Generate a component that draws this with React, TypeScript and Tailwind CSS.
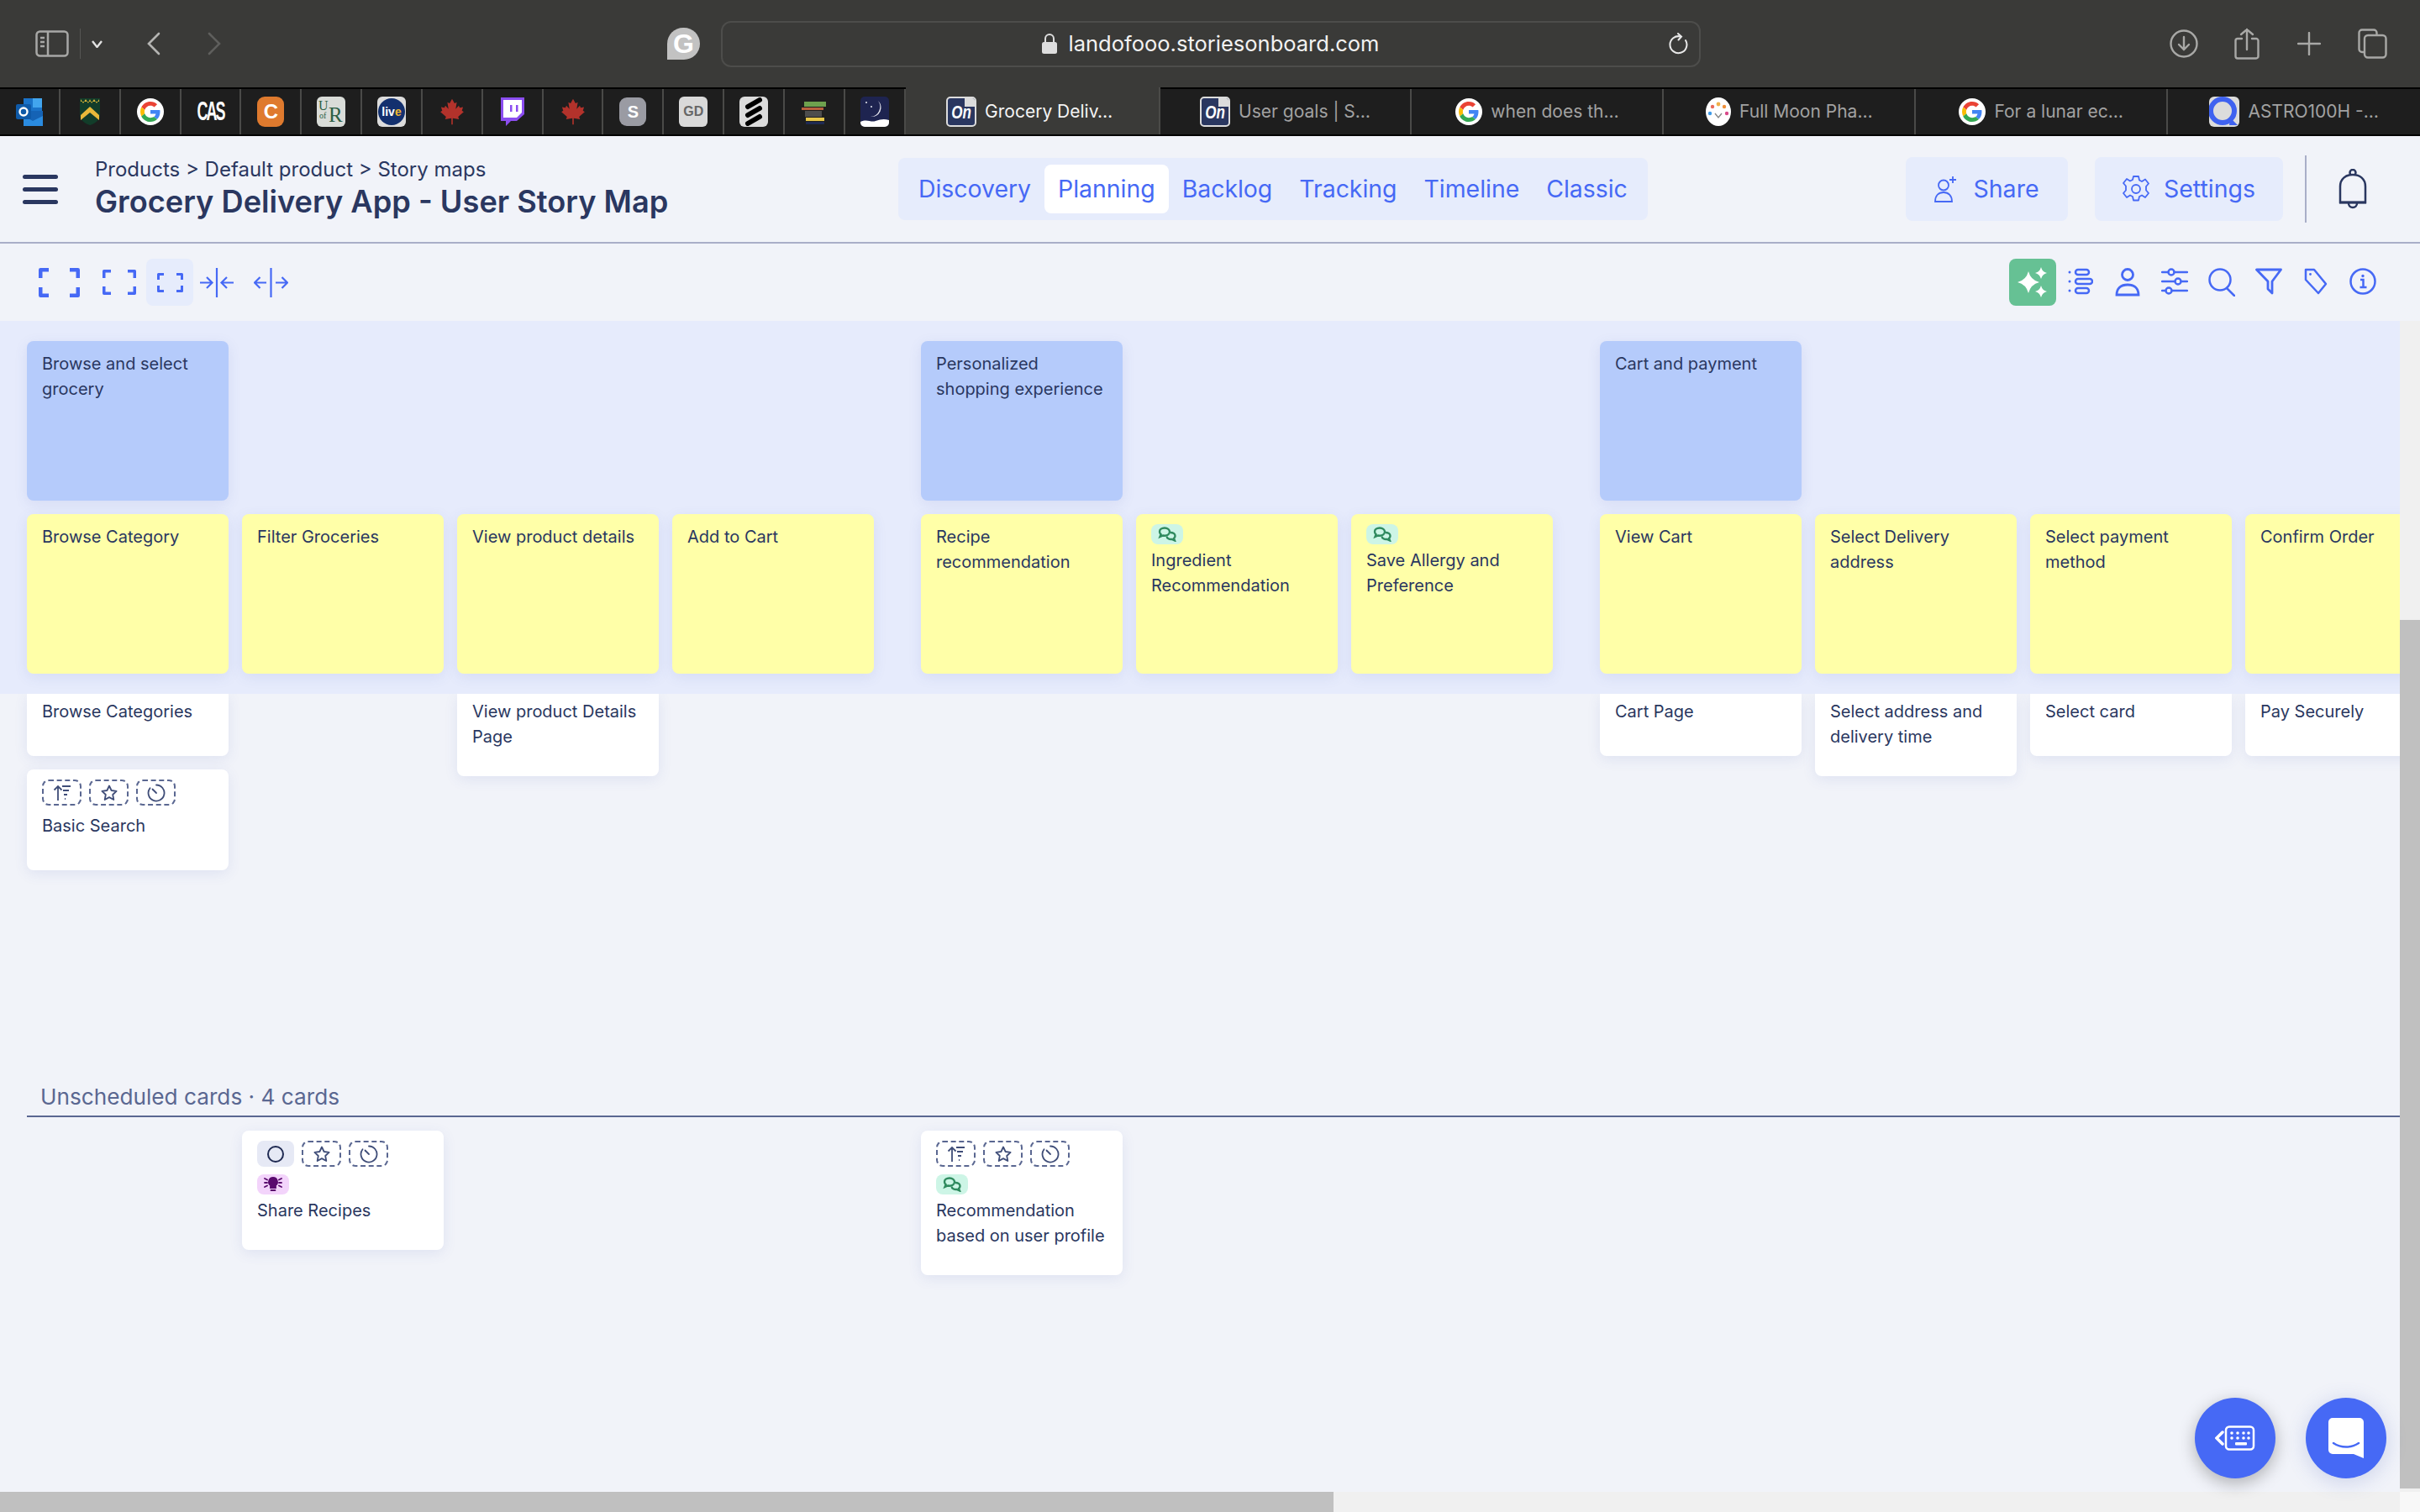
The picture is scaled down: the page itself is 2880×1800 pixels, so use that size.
import type { ReactNode } from "react";

const blue = "#4669f5";

type CardInfo = { title: string; height?: number; tag?: "chat" };

const Google = ({ size = 32 }: { size?: number }) => (
    <svg width={size} height={size} viewBox="-8 -8 64 64">
        <circle cx="24" cy="24" r="32" fill="#fff" />
        <path fill="#EA4335" d="M24 9.5c3.54 0 6.71 1.22 9.21 3.6l6.85-6.85C35.9 2.38 30.47 0 24 0 14.62 0 6.51 5.38 2.56 13.22l7.98 6.19C12.43 13.72 17.74 9.5 24 9.5z" />
        <path fill="#4285F4" d="M46.98 24.55c0-1.57-.15-3.09-.38-4.55H24v9.02h12.94c-.58 2.96-2.26 5.48-4.78 7.18l7.73 6c4.51-4.18 7.09-10.36 7.09-17.65z" />
        <path fill="#FBBC05" d="M10.53 28.59c-.48-1.45-.76-2.99-.76-4.59s.27-3.14.76-4.59l-7.98-6.19C.92 16.46 0 20.12 0 24c0 3.88.92 7.54 2.56 10.78l7.97-6.19z" />
        <path fill="#34A853" d="M24 48c6.48 0 11.93-2.13 15.89-5.81l-7.73-6c-2.15 1.45-4.92 2.3-8.16 2.3-6.26 0-11.57-4.22-13.47-9.91l-7.98 6.19C6.51 42.62 14.62 48 24 48z" />
    </svg>
);

const Maple = () => (
    <svg width="32" height="34" viewBox="0 0 24 25">
        <polygon fill="#b3322b" points="12,1 14.2,5 16.2,4 15.2,10 18,7 18.8,9 21.8,8.4 20.8,11.6 22.4,12.6 17.4,17 18.2,19.2 12.6,18.4 12.6,24 11.4,24 11.4,18.4 5.8,19.2 6.6,17 1.6,12.6 3.2,11.6 2.2,8.4 5.2,9 6,7 8.8,10 7.8,4 9.8,5" />
    </svg>
);

const Tile = ({ bg, color, children, className = "" }: { bg: string; color?: string; children?: ReactNode; className?: string }) => (
    <div className={`w-[34px] h-[36px] rounded-[6px] flex items-center justify-center overflow-hidden ${className}`} style={{ background: bg, color }}>
        {children}
    </div>
);

const OnIcon = () => (
    <div className="relative w-[36px] h-[36px] rounded-[5px] bg-[#2a3760] border-2 border-[#dcdcdc] flex items-center justify-center text-white italic font-bold text-[17px] font-['Liberation_Sans',sans-serif] overflow-hidden">
        <span className="scale-y-125 mt-[4px]">On</span>
        <div className="absolute top-0 right-0 w-[12px] h-[10px] bg-[#dcdcdc]" />
    </div>
);

const favicons: ReactNode[] = [
    <svg width="32" height="34" viewBox="0 0 32 34">
        <rect x="9" y="1" width="22" height="22" fill="#1a73c9" />
        <rect x="20" y="1" width="11" height="11" fill="#42a5ee" />
        <rect x="9" y="16" width="23" height="18" fill="#1563b5" />
        <path d="M9 22l11 6 12-6v12H9z" fill="#2a8be0" />
        <rect x="0" y="8" width="18" height="18" rx="2" fill="#0f5aa8" />
        <circle cx="9" cy="17" r="4.5" fill="none" stroke="#fff" strokeWidth="2.4" />
    </svg>,
    <svg width="26" height="34" viewBox="0 0 26 34">
        <path d="M1 1h24v20c0 6-6 10-12 12C7 31 1 27 1 21z" fill="#123d2a" />
        <path d="M2 2l3 5 3-5 3 5 2-5 2 5 3-5 3 5 3-5v3H2z" fill="#e0b93a" />
        <path d="M13 11l11 10v6l-11-9-11 9v-6z" fill="#e8b93a" />
    </svg>,
    <Google />,
    <span className="text-[18px] text-white font-bold tracking-[-2px] scale-y-[1.7] font-['Liberation_Sans',sans-serif]">CAS</span>,
    <Tile bg="#df7a2e" color="#fff" className="!w-[32px] !rounded-[9px] font-bold text-[24px] font-['Liberation_Sans',sans-serif]">C</Tile>,
    <Tile bg="#d9dcd8">
        <svg width="34" height="36" viewBox="0 0 34 36" fill="#2d5f45" fontFamily="Liberation Serif, serif">
            <text x="2" y="16" fontSize="16">U</text>
            <text x="3" y="26" fontSize="10">of</text>
            <text x="14" y="30" fontSize="25">R</text>
        </svg>
    </Tile>,
    <Tile bg="#dcdcdc">
        <div className="w-[32px] h-[32px] rounded-full bg-[#13306e] flex items-center justify-center text-[14px] font-bold text-white font-['Liberation_Sans',sans-serif]">
            liv<span className="text-[#f0b82d]">e</span>
        </div>
    </Tile>,
    <Maple />,
    <svg width="28" height="34" viewBox="0 0 28 34">
        <path d="M0 0h28v20l-9 8h-7l-6 6v-6H0z" fill="#8b4df0" />
        <path d="M3 3h22v15l-6 6H3z" fill="#fff" />
        <rect x="11" y="9" width="2.5" height="8" fill="#8b4df0" />
        <rect x="18" y="9" width="2.5" height="8" fill="#8b4df0" />
    </svg>,
    <Maple />,
    <Tile bg="#9a9ba3" color="#fff" className="!w-[32px] !h-[34px] !rounded-[9px] font-bold text-[20px] font-['Liberation_Sans',sans-serif]">S</Tile>,
    <Tile bg="#d9d9d9" color="#666" className="font-bold text-[16px] font-['Liberation_Sans',sans-serif]">GD</Tile>,
    <Tile bg="#dcdcdc">
        <svg width="24" height="34" viewBox="0 0 24 34">
            <path d="M19 3L5 11M19 13L5 21M19 23L5 31" stroke="#000" strokeWidth="6" strokeLinecap="round" />
        </svg>
    </Tile>,
    <svg width="34" height="32" viewBox="0 0 34 32">
        <rect x="5" y="4" width="26" height="6" fill="#6ea14e" />
        <rect x="2" y="11" width="26" height="3" fill="#b9603e" />
        <rect x="6" y="15" width="20" height="7" fill="#4d4d4d" />
        <rect x="7" y="23" width="22" height="4" fill="#e6c648" />
        <rect x="7" y="28" width="22" height="3" fill="#1f2a52" />
    </svg>,
    <svg width="34" height="36" viewBox="0 0 34 36">
        <rect width="34" height="36" rx="5" fill="#1e2450" />
        <path d="M21 5a11 11 0 0 1-9 19 12 12 0 0 0 9-19z" fill="#e8e8f0" />
        <circle cx="7" cy="7" r="1" fill="#e8e8f0" />
        <circle cx="13" cy="12" r="1" fill="#e8e8f0" />
        <path d="M0 30c8-4 12 1 18-1s10-3 16-1v3a5 5 0 0 1-5 5H5a5 5 0 0 1-5-5z" fill="#fff" />
    </svg>,
];

const FullMoon = () => (
    <svg width="30" height="34" viewBox="0 0 30 34">
        <ellipse cx="15" cy="17" rx="15" ry="17" fill="#fff" />
        <circle cx="15" cy="8" r="2.4" fill="#f0b04a" />
        <circle cx="8" cy="11" r="2.2" fill="#e96a5a" />
        <circle cx="22" cy="11" r="2.2" fill="#f0903a" />
        <circle cx="5" cy="19" r="2.2" fill="#3f9be8" />
        <circle cx="25" cy="19" r="2.2" fill="#d94a8a" />
        <path d="M11 19l4 5 4-5" stroke="#888" strokeWidth="1.4" fill="none" />
    </svg>
);

const QIcon = () => (
    <Tile bg="#dcdcdc" className="!w-[36px]">
        <svg width="36" height="36" viewBox="0 0 36 36">
            <circle cx="16" cy="17" r="14" fill="none" stroke="#3f62f0" strokeWidth="6" />
            <path d="M25 25l9 9H24z" fill="#3f62f0" />
        </svg>
    </Tile>
);

const tabs: { icon: ReactNode; label: string }[] = [
    { icon: <OnIcon />, label: "User goals | S…" },
    { icon: <Google />, label: "when does th…" },
    { icon: <FullMoon />, label: "Full Moon Pha…" },
    { icon: <Google />, label: "For a lunar ec…" },
    { icon: <QIcon />, label: "ASTRO100H -…" },
];

const BrowserBar = () => (
    <div className="h-[104px] bg-[#3a3a38] flex items-center">
        <svg className="ml-[42px]" width="40" height="32" viewBox="0 0 40 32" fill="none" stroke="#a8a8a6" strokeWidth="2.5">
            <rect x="1.5" y="1.5" width="37" height="29" rx="4" />
            <path d="M15 2v28" />
            <path d="M6 9h5M6 14h5M6 19h5" />
        </svg>
        <div className="ml-[13px] w-px h-[36px] bg-[#555553]" />
        <svg className="ml-[13px]" width="13" height="9" viewBox="0 0 13 9" fill="none" stroke="#e2e2e2" strokeWidth="2.4">
            <path d="M1 1l5.5 7L12 1" />
        </svg>
        <svg className="ml-[52px]" width="17" height="28" viewBox="0 0 17 28" fill="none" stroke="#b4b4b2" strokeWidth="2.6" strokeLinecap="round">
            <path d="M15 2L3 14l12 12" />
        </svg>
        <svg className="ml-[56px]" width="17" height="28" viewBox="0 0 17 28" fill="none" stroke="#5f5f5d" strokeWidth="2.6" strokeLinecap="round">
            <path d="M2 2l12 12L2 26" />
        </svg>
        <div className="ml-[530px] w-[39px] h-[38px] bg-[#c2c2c2] rounded-t-full rounded-br-full flex items-center justify-center text-white font-bold text-[32px] font-['Liberation_Sans',sans-serif]">
            G
        </div>
        <div className="ml-[25px] w-[1166px] h-[55px] rounded-[12px] border-2 border-[#4d4d4b] flex items-center pr-[12px]">
            <div className="flex-1 flex items-center justify-center gap-[14px] pl-[35px]">
                <svg width="18" height="24" viewBox="0 0 18 24">
                    <path d="M4 10V6a5 5 0 0 1 10 0v4" fill="none" stroke="#dedede" strokeWidth="2" />
                    <rect y="10" width="18" height="14" rx="2.5" fill="#dedede" />
                </svg>
                <span className="text-[25.5px] text-[#f2f2f2] font-['Inter',sans-serif]">landofooo.storiesonboard.com</span>
            </div>
            <svg width="24" height="26" viewBox="0 0 24 26" fill="none" stroke="#e8e8e8" strokeWidth="2" strokeLinecap="round">
                <path d="M20 9a10 10 0 1 1-6-4.500" />
                <path d="M11 1l4 3.500-3.500 4" />
            </svg>
        </div>
        <svg className="ml-[558px]" width="34" height="34" viewBox="0 0 34 34" fill="none" stroke="#a8a8a6" strokeWidth="2.400" strokeLinecap="round">
            <circle cx="17" cy="17" r="15.500" />
            <path d="M17 9v15M11 18l6 6 6-6" />
        </svg>
        <svg className="ml-[43px]" width="30" height="38" viewBox="0 0 30 38" fill="none" stroke="#a8a8a6" strokeWidth="2.400" strokeLinecap="round">
            <path d="M9 13H4a2.500 2.500 0 0 0-2.500 2.500V34A2.500 2.500 0 0 0 4 36.500h22a2.500 2.500 0 0 0 2.500-2.500V15.500A2.500 2.500 0 0 0 26 13h-5" />
            <path d="M15 26V2M8 8l7-6 7 6" />
        </svg>
        <svg className="ml-[45px]" width="28" height="28" viewBox="0 0 28 28" stroke="#a8a8a6" strokeWidth="2.400" strokeLinecap="round">
            <path d="M14 1v26M1 14h26" />
        </svg>
        <svg className="ml-[44px]" width="35" height="36" viewBox="0 0 35 36" fill="none" stroke="#a8a8a6" strokeWidth="2.400">
            <path d="M7 28H5a3.500 3.500 0 0 1-3.500-3.500V5A3.500 3.500 0 0 1 5 1.500h14A3.500 3.500 0 0 1 22.500 5v2" />
            <rect x="8" y="8" width="25.500" height="26.500" rx="4" />
        </svg>
    </div>
);

const TabStrip = () => (
    <div className="h-[58px] bg-[#1e1e1e] flex border-y-2 border-black">
        {favicons.map((icon, index) => (
            <div key={index} className="w-[71.87px] flex items-center justify-center border-r-2 border-[#4a4a48]">
                {icon}
            </div>
        ))}
        <div className="w-[303px] -mt-[2px] pt-[2px] pr-[6px] bg-[#3a3a38] flex items-center justify-center gap-[10px] border-r-2 border-[#4a4a48]">
            <OnIcon />
            <span className="text-[21px] text-[#f4f4f4] font-['Inter',sans-serif]">Grocery Deliv…</span>
        </div>
        {tabs.map((tab, index) => (
            <div key={index} className="w-[300px] flex items-center justify-center gap-[10px] border-r-2 border-[#4a4a48] last:border-r-0">
                {tab.icon}
                <span className="text-[21px] text-[#a2a2a2] font-['Inter',sans-serif]">{tab.label}</span>
            </div>
        ))}
    </div>
);

const navItems = ["Discovery", "Planning", "Backlog", "Tracking", "Timeline", "Classic"];

const Header = () => (
    <header className="h-[128px] border-b-2 border-[#a9aec8] flex items-center">
        <div className="ml-[27px] w-[42px] flex flex-col gap-[10px]">
            <div className="h-[5px] rounded-full bg-[#2a3760]" />
            <div className="h-[5px] rounded-full bg-[#2a3760]" />
            <div className="h-[5px] rounded-full bg-[#2a3760]" />
        </div>
        <div className="ml-[44px] w-[956px] pb-[2px] text-[#2a3760]">
            <div className="text-[24px] leading-[32px]">Products &gt; Default product &gt; Story maps</div>
            <div className="text-[36.2px] leading-[44px] font-semibold">Grocery Delivery App - User Story Map</div>
        </div>
        <nav className="w-[892px] h-[74px] rounded-[8px] bg-[#e6ecfc] flex items-center px-[8px]">
            {navItems.map((item) => (
                <div key={item} className={`h-[58px] px-[16px] rounded-[8px] flex items-center text-[28.4px] text-[#4669f5] ${item === "Planning" ? "bg-white" : ""}`}>
                    {item}
                </div>
            ))}
        </nav>
        <button className="ml-[307px] w-[193px] h-[76px] rounded-[8px] bg-[#e6ecfc] flex items-center justify-center gap-[18px] text-[28.5px] text-[#4669f5]">
            <svg width="28" height="32" viewBox="0 0 28 32" fill="none" stroke={blue} strokeWidth="1.800">
                <circle cx="11" cy="11.500" r="6" />
                <path d="M1 31c0-7 4-11 10-11s10 4 10 11z" />
                <path d="M22 1v8M18 5h8" />
            </svg>
            Share
        </button>
        <button className="ml-[32px] w-[224px] h-[76px] rounded-[8px] bg-[#e6ecfc] flex items-center justify-center gap-[17px] text-[28.5px] text-[#4669f5]">
            <svg width="32" height="32" viewBox="0 0 32 32" fill="none" stroke={blue} strokeWidth="1.800" strokeLinejoin="round">
                <circle cx="16" cy="16" r="5" />
                <path d="M13 1h6l1 4.500 3 1.500 4-2.500 4 5-3 3.500v4.500l3 3.500-4 5-4-2.500-3 1.500-1 4.500h-6l-1-4.500-3-1.500-4 2.500-4-5 3-3.500V12.500L1 9l4-5 4 2.500 3-1.500z" />
            </svg>
            Settings
        </button>
        <div className="ml-[26px] w-[2px] h-[80px] bg-[#a9aec8]" />
        <svg className="ml-[38px]" width="34" height="48" viewBox="0 0 34 48" fill="none" stroke="#2a3760" strokeWidth="2.500">
            <circle cx="17" cy="4.500" r="3.500" />
            <path d="M2 40V21C2 12 8.500 7 17 7s15 5 15 14v19z" fill="#f1f3f9" />
            <path d="M1 40h32" strokeWidth="3" />
            <path d="M12 41a5 5 0 0 0 10 0" />
        </svg>
    </header>
);

const Frame = ({ w, h, weight, corner }: { w: number; h: number; weight: number; corner: number }) => {
    const p = weight / 2;
    return (
        <svg width={w} height={h} viewBox={`0 0 ${w} ${h}`} fill="none" stroke={blue} strokeWidth={weight} strokeLinejoin="round">
            <path d={`M${p} ${corner}V${p}H${corner}M${w - corner} ${p}H${w - p}V${corner}M${w - p} ${h - corner}V${h - p}H${w - corner}M${corner} ${h - p}H${p}V${h - corner}`} />
        </svg>
    );
};

const star = (cx: number, cy: number, r: number) => {
    const k = r * 0.2;
    return `M${cx} ${cy - r}Q${cx + k} ${cy - k} ${cx + r} ${cy}Q${cx + k} ${cy + k} ${cx} ${cy + r}Q${cx - k} ${cy + k} ${cx - r} ${cy}Q${cx - k} ${cy - k} ${cx} ${cy - r}Z`;
};

const toolIcons: ReactNode[] = [
    <svg width="30" height="32" viewBox="0 0 30 32" fill="none" stroke={blue} strokeWidth="2.500">
        <circle cx="2" cy="5" r="1.500" fill={blue} stroke="none" />
        <circle cx="2" cy="16" r="1.500" fill={blue} stroke="none" />
        <circle cx="2" cy="27" r="1.500" fill={blue} stroke="none" />
        <rect x="9" y="2" width="16" height="6" rx="3" />
        <rect x="9" y="13" width="20" height="6" rx="3" />
        <rect x="9" y="24" width="16" height="6" rx="3" />
    </svg>,
    <svg width="30" height="34" viewBox="0 0 30 34" fill="none" stroke={blue} strokeWidth="2.800">
        <circle cx="15" cy="8" r="6.500" />
        <path d="M2 32c0-8 5-12 13-12s13 4 13 12z" />
    </svg>,
    <svg width="32" height="32" viewBox="0 0 32 32" fill="none" stroke={blue} strokeWidth="2.500" strokeLinecap="round">
        <path d="M1 5h7M16 5h15M1 16h15M24 16h7M1 27h4M13 27h18" />
        <circle cx="12" cy="5" r="3.500" />
        <circle cx="20" cy="16" r="3.500" />
        <circle cx="9" cy="27" r="3.500" />
    </svg>,
    <svg width="32" height="34" viewBox="0 0 32 34" fill="none" stroke={blue} strokeWidth="2.500" strokeLinecap="round">
        <circle cx="14" cy="14" r="12.500" />
        <path d="M22 24l9 9" />
    </svg>,
    <svg width="32" height="32" viewBox="0 0 32 32" fill="none" stroke={blue} strokeWidth="2.800" strokeLinejoin="round">
        <path d="M1.500 2h29L20 16v14l-5-5v-9z" />
    </svg>,
    <svg width="28" height="32" viewBox="0 0 28 32" fill="none" stroke={blue} strokeWidth="2.500" strokeLinejoin="round">
        <path d="M2 2h10l14 17-9 11L2 14z" />
        <circle cx="7.500" cy="7.500" r="1.400" fill={blue} stroke="none" />
    </svg>,
    <svg width="32" height="32" viewBox="0 0 32 32" fill="none" stroke={blue} strokeWidth="2.500">
        <circle cx="16" cy="16" r="14.500" />
        <circle cx="16" cy="9.500" r="1.700" fill={blue} stroke="none" />
        <path d="M13 14h3.500v9M12.500 23h8" />
    </svg>,
];

const ToolRow = () => (
    <div className="h-[92px] flex items-center">
        <div className="ml-[46px]"><Frame w={49} h={35} weight={4.5} corner={12} /></div>
        <div className="ml-[27px]"><Frame w={40} h={30} weight={3.5} corner={10} /></div>
        <div className="ml-[12px] w-[56px] h-[56px] rounded-[8px] bg-[#e6ecfc] flex items-center justify-center">
            <Frame w={31} h={23} weight={3} corner={8} />
        </div>
        <svg className="ml-[8px]" width="40" height="35" viewBox="0 0 40 35" fill="none" stroke={blue} strokeWidth="2.200">
            <path d="M20 0v35M0 17.500h14M8 11l6.500 6.500L8 24M40 17.500H26M32 11l-6.500 6.500L32 24" />
        </svg>
        <svg className="ml-[24px]" width="41" height="35" viewBox="0 0 41 35" fill="none" stroke={blue} strokeWidth="2.200">
            <path d="M20.500 0v35M15 17.500H1M7.500 11L1 17.500 7.500 24M26 17.500h14M33.500 11l6.500 6.500-6.500 6.500" />
        </svg>
        <div className="ml-auto w-[56px] h-[56px] rounded-[8px] bg-[#66c194] flex items-center justify-center">
            <svg width="36" height="36" viewBox="0 0 36 36" fill="#fff">
                <path d={star(13, 18, 13)} />
                <path d={star(28, 7, 7)} />
                <path d={star(28, 29, 7)} />
            </svg>
        </div>
        <div className="ml-[1px] mr-[40px] flex">
            {toolIcons.map((icon, index) => (
                <div key={index} className="w-[56px] flex justify-center">{icon}</div>
            ))}
        </div>
    </div>
);

const SortIcon = () => (
    <svg width="22" height="20" viewBox="0 0 22 20" fill="none" stroke="#3f4d78" strokeWidth="1.800">
        <path d="M6 19V2M1.500 6.500L6 2l4.500 4.500M11 2h10M12 7h7M13 12h4M14 17h1" />
    </svg>
);
const StarIcon = () => (
    <svg width="20" height="20" viewBox="0 0 20 20" fill="none" stroke="#3f4d78" strokeWidth="1.800" strokeLinejoin="round">
        <path d="M10 1.500l2.600 5.500 6 .8-4.400 4.200 1.100 6L10 15.100 4.700 18l1.100-6L1.400 7.800l6-.8z" />
    </svg>
);
const TimerIcon = () => (
    <svg width="22" height="22" viewBox="0 0 22 22" fill="none" stroke="#3f4d78" strokeWidth="1.800" strokeLinecap="round">
        <path d="M11 1.500a9.500 9.500 0 1 1-7.500 3.700" />
        <path d="M6.500 6.500L11 11" />
    </svg>
);
const ChatIcon = () => (
    <svg width="24" height="18" viewBox="0 0 24 18" fill="none" stroke="#2f8a5e" strokeWidth="2.400">
        <path d="M9 1.500c-3.500 0-6 2-6 4.500 0 1.300.6 2.400 1.600 3.200L3.500 12l3.500-1.500c.7.200 1.300.2 2 .2 3.500 0 6-2 6-4.600S12.500 1.500 9 1.500z" />
        <path d="M16 7c3 0 5.500 1.600 5.500 4 0 1.200-.6 2.200-1.500 2.900l1 2.600-3.400-1.500c-3 .3-6-1-6-3.500" />
    </svg>
);
const BulbIcon = () => (
    <svg width="22" height="20" viewBox="0 0 22 20" fill="#5a0a6e" stroke="#5a0a6e" strokeWidth="1.800" strokeLinecap="round">
        <path d="M11 2a5 5 0 0 0-3 9v3h6v-3a5 5 0 0 0-3-9z" />
        <path d="M8.500 17h5M1 3l3 1.500M1 8h3M1 13l3-1.500M21 3l-3 1.500M21 8h-3M21 13l-3-1.500" fill="none" />
    </svg>
);

const Dash = ({ children }: { children: ReactNode }) => (
    <div className="w-[47px] h-[31px] rounded-[8px] border-2 border-dashed border-[#5a6791] flex items-center justify-center">
        {children}
    </div>
);

const PillRow = ({ first }: { first: "sort" | "open" }) => (
    <div className="flex gap-[9px]">
        {first === "sort" ? (
            <Dash><SortIcon /></Dash>
        ) : (
            <div className="w-[44px] h-[31px] rounded-[8px] bg-[#e6e9f5] flex items-center justify-center">
                <div className="w-[20px] h-[20px] rounded-full border-2 border-[#1f2a52]" />
            </div>
        )}
        <Dash><StarIcon /></Dash>
        <Dash><TimerIcon /></Dash>
    </div>
);

const Badge = ({ kind }: { kind: "chat" | "bulb" }) => (
    <div className={`w-[38px] h-[24px] rounded-[8px] flex items-center justify-center ${kind === "chat" ? "bg-[#cdf5e6]" : "bg-[#f3d4fb]"}`}>
        {kind === "chat" ? <ChatIcon /> : <BulbIcon />}
    </div>
);

const activities: (string | null)[] = [
    "Browse and select grocery", null, null, null,
    "Personalized shopping experience", null, null,
    "Cart and payment", null, null, null,
];

const steps: CardInfo[] = [
    { title: "Browse Category" },
    { title: "Filter Groceries" },
    { title: "View product details" },
    { title: "Add to Cart" },
    { title: "Recipe recommendation" },
    { title: "Ingredient Recommendation", tag: "chat" },
    { title: "Save Allergy and Preference", tag: "chat" },
    { title: "View Cart" },
    { title: "Select Delivery address" },
    { title: "Select payment method" },
    { title: "Confirm Order" },
];

const stories: CardInfo[] = [
    { title: "Browse Categories", height: 74 },
    { title: "", height: 0 },
    { title: "View product Details Page", height: 98 },
    { title: "", height: 0 },
    { title: "", height: 0 },
    { title: "", height: 0 },
    { title: "", height: 0 },
    { title: "Cart Page", height: 74 },
    { title: "Select address and delivery time", height: 98 },
    { title: "Select card", height: 74 },
    { title: "Pay Securely", height: 74 },
];

// columns are 240 wide, with a wider gap between the three activities
const Columns = ({ children }: { children: (index: number) => ReactNode }) => {
    const groups = [[0, 1, 2, 3], [4, 5, 6], [7, 8, 9, 10]];
    return (
        <div className="flex gap-[56px] pl-[32px]">
            {groups.map((group, g) => (
                <div key={g} className="flex gap-[16px]">
                    {group.map((index) => (
                        <div key={index} className="w-[240px] shrink-0 flex flex-col gap-[16px]">
                            {children(index)}
                        </div>
                    ))}
                </div>
            ))}
        </div>
    );
};

const cardShadow = "shadow-[0_4px_16px_rgba(70,90,180,0.10)]";

const Board = () => (
    <div className="flex-1 flex flex-col overflow-hidden">
        <section className="relative z-10 bg-[#e6ebfc] h-[444px] pt-[24px] flex flex-col gap-[16px] overflow-hidden">
            <Columns>
                {(i) => activities[i] ? (
                    <div className={`h-[190px] p-[18px] pt-[12px] rounded-[8px] bg-[#b5cbfb] text-[20px] leading-[30px] text-[#2a3760] ${cardShadow}`}>
                        {activities[i]}
                    </div>
                ) : <div className="h-[190px]" />}
            </Columns>
            <Columns>
                {(i) => (
                    <div className={`h-[190px] px-[18px] pt-[12px] rounded-[8px] bg-[#ffffa8] text-[20px] leading-[30px] text-[#2a3760] ${cardShadow}`}>
                        {steps[i].tag && <div className="mb-[4px]"><Badge kind="chat" /></div>}
                        {steps[i].title}
                    </div>
                )}
            </Columns>
        </section>
        <section className="h-[454px]">
            <Columns>
                {(i) => (
                    <>
                        {stories[i].title && (
                            <div className={`px-[18px] pt-[6px] rounded-b-[8px] bg-white text-[20px] leading-[30px] text-[#2a3760] ${cardShadow}`} style={{ height: stories[i].height }}>
                                {stories[i].title}
                            </div>
                        )}
                        {i === 0 && (
                            <div className={`h-[120px] px-[18px] pt-[12px] rounded-[8px] bg-white text-[20px] leading-[30px] text-[#2a3760] ${cardShadow}`}>
                                <PillRow first="sort" />
                                <div className="mt-[9px]">Basic Search</div>
                            </div>
                        )}
                    </>
                )}
            </Columns>
        </section>
        <div className="ml-[32px] h-[50px] pl-[16px] border-b-2 border-[#5a6791] text-[26.2px] leading-[52px] text-[#5a6791]">
            Unscheduled cards · 4 cards
        </div>
        <section className="pt-[16px]">
            <Columns>
                {(i) => (i === 1 || i === 4) ? (
                    <div className={`px-[18px] pt-[12px] rounded-[8px] bg-white text-[20px] leading-[30px] text-[#2a3760] ${cardShadow}`} style={{ height: i === 1 ? 142 : 172 }}>
                        <PillRow first={i === 1 ? "open" : "sort"} />
                        <div className="mt-[9px] mb-[4px]"><Badge kind={i === 1 ? "bulb" : "chat"} /></div>
                        {i === 1 ? "Share Recipes" : "Recommendation based on user profile"}
                    </div>
                ) : null}
            </Columns>
        </section>
    </div>
);

const Fabs = () => (
    <div className="absolute right-[40px] bottom-[40px] z-20 flex gap-[36px]">
        <div className="w-[96px] h-[96px] rounded-full bg-[#4669f5] shadow-[0_6px_20px_rgba(0,0,0,0.28)] flex items-center justify-center">
            <svg width="48" height="30" viewBox="0 0 48 30" fill="none" stroke="#fff" strokeWidth="2.500">
                <path d="M9 8L2 15l7 7" strokeWidth="3.500" strokeLinecap="round" />
                <rect x="13" y="1.500" width="33" height="27" rx="4" />
                <g fill="#fff" stroke="none">
                    <circle cx="20" cy="9" r="1.800" /><circle cx="27" cy="9" r="1.800" /><circle cx="34" cy="9" r="1.800" /><circle cx="40" cy="9" r="1.800" />
                    <circle cx="20" cy="15" r="1.800" /><circle cx="27" cy="15" r="1.800" /><circle cx="34" cy="15" r="1.800" /><circle cx="40" cy="15" r="1.800" />
                    <rect x="24" y="20" width="14" height="3.500" rx="1" />
                </g>
            </svg>
        </div>
        <div className="w-[96px] h-[96px] rounded-full bg-[#4669f5] shadow-[0_4px_24px_rgba(70,90,180,0.22)] flex items-center justify-center">
            <svg width="42" height="48" viewBox="0 0 42 48" fill="none">
                <path d="M5 0h32a5 5 0 0 1 5 5v43l-12-5H5a5 5 0 0 1-5-5V5a5 5 0 0 1 5-5z" fill="#fff" />
                <path d="M6 30c9 6 21 6 30 0" stroke="#4669f5" strokeWidth="2.500" strokeLinecap="round" />
            </svg>
        </div>
    </div>
);

const App = () => {
    return (
        <div className="relative w-[2880px] h-[1800px] flex flex-col overflow-hidden bg-[#f1f3f9] font-['Inter',sans-serif]">
            <BrowserBar />
            <TabStrip />
            <Header />
            <ToolRow />
            <div className="flex-1 flex min-h-0">
                <Board />
                <div className="w-[24px] bg-[#f0f0f0] pt-[356px]">
                    <div className="h-[1034px] bg-[#c0c0c0]" />
                </div>
            </div>
            <div className="h-[24px] flex bg-[#f0f0f0]">
                <div className="w-[1587px] bg-[#c0c0c0]" />
                <div className="ml-auto w-[24px] bg-[#f8f8f8]" />
            </div>
            <Fabs />
        </div>
    );
};

export default App;
